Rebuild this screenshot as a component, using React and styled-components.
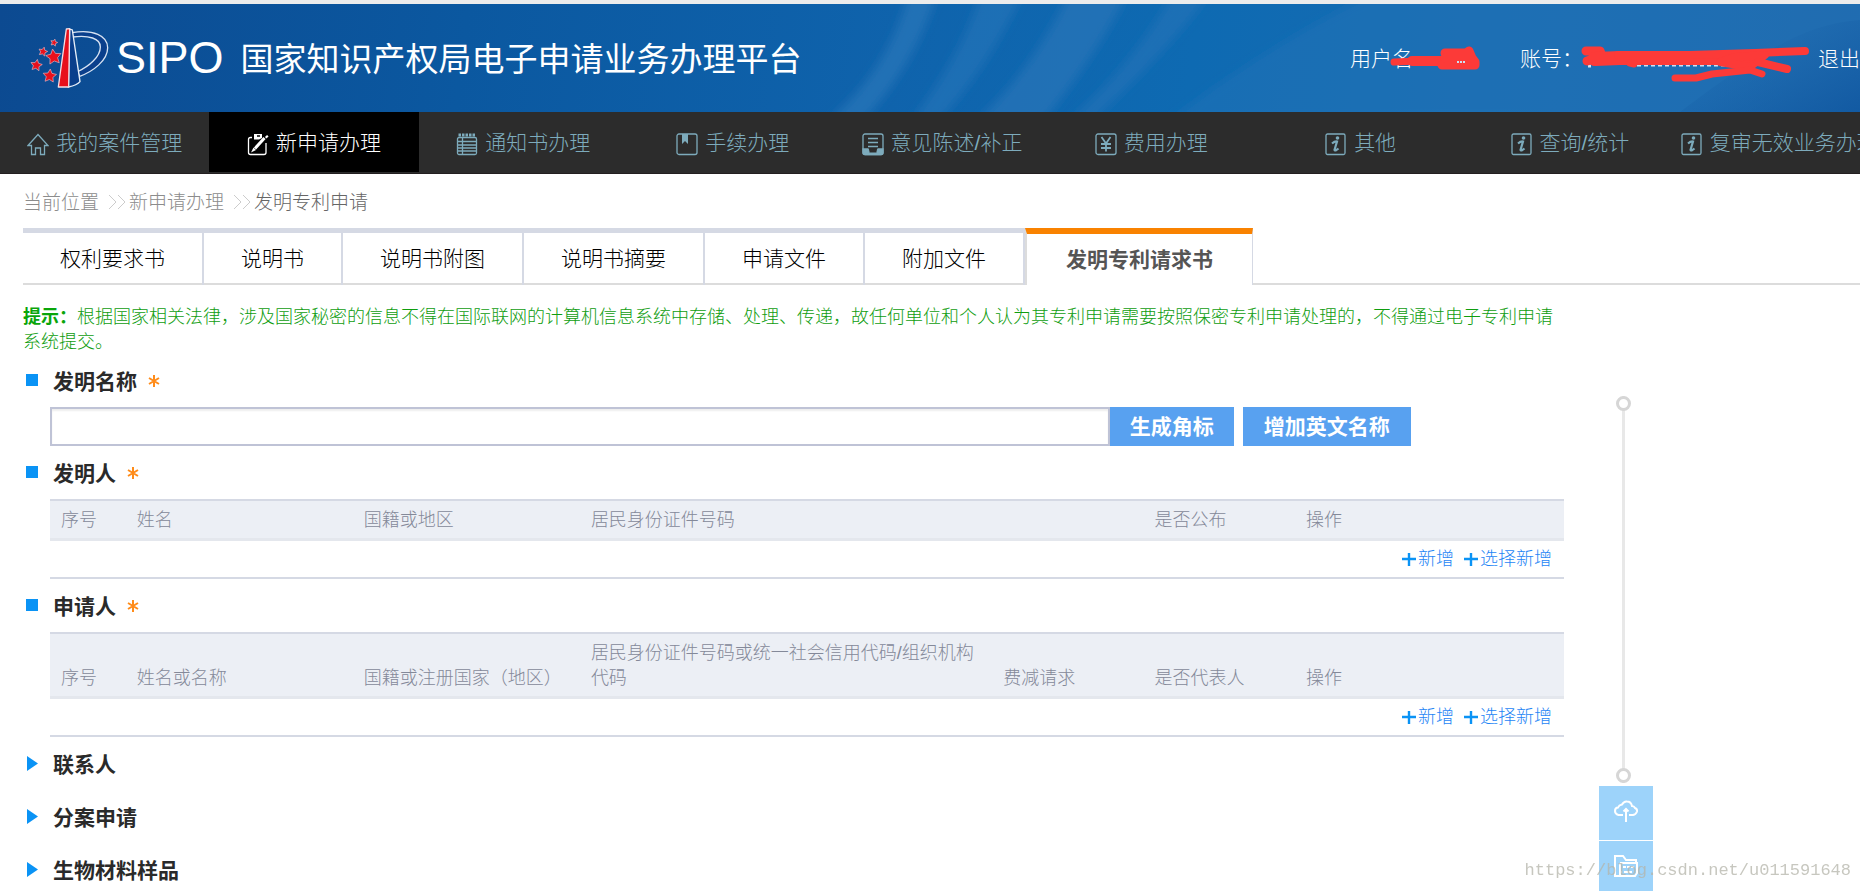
import React, { useState } from 'react';

import styled, { createGlobalStyle, css } from 'styled-components';

const GlobalStyle = createGlobalStyle`
  * {
    box-sizing: border-box;
  }

  body {
    margin: 0;
    background: #fff;
    color: #222;
    font-family: "Liberation Sans", "Noto Sans CJK SC", sans-serif;
    font-size: 18px;
    font-weight: 300;
    line-height: 25px;
  }

  button,
  input {
    font-family: inherit;
  }

  a {
    color: inherit;
    text-decoration: none;
  }
`;

const navItems = [
  { label: '我的案件管理', icon: 'home' },
  { label: '新申请办理', icon: 'edit', active: true },
  { label: '通知书办理', icon: 'notebook' },
  { label: '手续办理', icon: 'bookmark' },
  { label: '意见陈述/补正', icon: 'inbox' },
  { label: '费用办理', icon: 'yen' },
  { label: '其他', icon: 'info' },
  { label: '查询/统计', icon: 'info' },
  { label: '复审无效业务办理', icon: 'info' },
];

const tabs = ['权利要求书', '说明书', '说明书附图', '说明书摘要', '申请文件', '附加文件', '发明专利请求书'];

const inventorColumns = ['序号', '姓名', '国籍或地区', '居民身份证件号码', '', '是否公布', '操作'];

const applicantColumns = [
  '序号',
  '姓名或名称',
  '国籍或注册国家（地区）',
  '居民身份证件号码或统一社会信用代码/组织机构代码',
  '费减请求',
  '是否代表人',
  '操作',
];

const starPoints = (cx, cy, r, turn) => (
  Array.from({ length: 10 }, (_, i) => {
    const radius = i % 2 ? r * 0.5 : r;
    const angle = ((i * 36 - 90 + turn) * Math.PI) / 180;
    return `${(cx + radius * Math.cos(angle)).toFixed(1)},${(cy + radius * Math.sin(angle)).toFixed(1)}`;
  }).join(' ')
);

const Logo = () => (
  <svg width="90" height="75" viewBox="0 4 270 225" aria-hidden="true">
    <g fill="#e8101c" stroke="#e9b8c4" strokeWidth="2">
      <polygon points={starPoints(87, 69, 11, 15)} />
      <polygon points={starPoints(54, 96, 14, 15)} />
      <polygon points={starPoints(86, 112, 24, -8)} />
      <polygon points={starPoints(34, 137, 18, 10)} />
      <polygon points={starPoints(74, 169, 21, 5)} />
    </g>
    <path
      d="M141 39 C205 28 248 48 248 84 C248 122 205 155 164 170 L158 156 C192 140 226 112 226 82 C226 56 192 46 143 52 Z"
      fill="#0a3f8c"
      stroke="#d6e2f2"
      strokeWidth="4"
      strokeLinejoin="round"
    />
    <path d="M134 28 L142 31 L165 186 C158 195 146 199 130 202 Z" fill="#0a3f8c" stroke="#e6eef8" strokeWidth="4" />
    <path d="M124 28 L134 27 L131 202 L100 202 Z" fill="#e8101c" stroke="#f3dfe4" strokeWidth="4" strokeLinejoin="round" />
  </svg>
);

const Streaks = () => (
  <StreaksSvg viewBox="0 0 1860 108" preserveAspectRatio="none" aria-hidden="true">
    <defs>
      <filter id="soft" x="-10%" y="-10%" width="120%" height="120%">
        <feGaussianBlur stdDeviation="5" />
      </filter>
      <linearGradient id="corner" x1="0" y1="0" x2="1" y2="1">
        <stop offset="0.3" stopColor="#1258a0" stopOpacity="0" />
        <stop offset="1" stopColor="#0c529c" stopOpacity="0.7" />
      </linearGradient>
    </defs>
    <g fill="#2b76b9" filter="url(#soft)">
      <path d="M908 -8 C896 36 874 76 830 116 H864 C900 76 922 36 936 -8 Z" opacity="0.7" />
      <path d="M980 -8 C966 36 942 76 912 116 H940 C976 76 1000 36 1022 -8 Z" opacity="0.55" />
      <path d="M1068 -8 C1046 36 1020 76 978 116 H1044 C1076 76 1104 36 1126 -8 Z" opacity="0.65" />
      <path d="M1172 -8 C1146 36 1114 76 1070 116 H1094 C1136 76 1176 36 1208 -8 Z" opacity="0.5" />
      <path d="M1368 -8 C1300 26 1232 68 1170 116 H1870 V-8 Z" opacity="0.4" />
    </g>
    <path d="M1860 16 C1810 20 1770 40 1680 108 H1860 Z" fill="url(#corner)" />
  </StreaksSvg>
);

const NameScribble = () => (
  <Scribble width="170" height="60" viewBox="1350 30 170 60" aria-hidden="true">
    <g fill="none" stroke="#fc3a38" strokeLinecap="round" strokeLinejoin="round">
      <path d="M1394 62 L1446 60" strokeWidth="7" />
      <path d="M1412 61 L1446 61" strokeWidth="10" />
      <path d="M1445 53 H1466 L1469 51 L1472 58 L1475 62 V65 H1442" strokeWidth="9" />
      <path d="M1445 58 H1470" strokeWidth="9" />
    </g>
    <path d="M1457 62 H1466" stroke="#cfe0f2" strokeWidth="2" strokeDasharray="2 1" />
  </Scribble>
);

const AccountScribble = () => (
  <Scribble width="298" height="60" viewBox="1520 30 298 60" aria-hidden="true">
    <path d="M1588 66 H1591 M1637 65 H1728" stroke="#cfe0f2" strokeWidth="3" strokeDasharray="4 3" />
    <g fill="none" stroke="#fc3a38" strokeLinecap="round" strokeLinejoin="round">
      <path d="M1586 51 H1600 L1602 56 L1587 61" strokeWidth="9" />
      <path d="M1595 59 L1620 58 L1740 58" strokeWidth="14" />
      <path d="M1618 55 L1690 55 L1755 53 L1805 51" strokeWidth="8" />
      <path d="M1630 63 L1634 64" strokeWidth="7" />
      <path d="M1735 57 L1765 55 L1750 67 L1720 62 Z" strokeWidth="8" fill="#fc3a38" />
      <path d="M1675 78 H1696 L1712 74 L1750 70 L1762 74" strokeWidth="7" />
      <path d="M1758 62 L1787 69" strokeWidth="8" />
    </g>
  </Scribble>
);

const iconShapes = {
  home: <path d="M1 12.5 L11 1.5 L21 12.5 H17.5 V21.5 H13.5 V15 H8.5 V21.5 H4.5 V12.5 Z" />,
  edit: (
    <>
      <path d="M5 4.5 H3.5 Q1.5 4.5 1.5 6.5 V19.5 Q1.5 21.5 3.5 21.5 H17 Q19 21.5 19 19.5 V10" />
      <path d="M7 1 H15 V5 L12 6.5 H7 Z" fill="currentColor" stroke="none" />
      <path d="M10 3 H13" stroke="#000" strokeWidth="1.5" />
      <path d="M17.5 5 L8 15.5" strokeWidth="3" />
      <path d="M19 3 L20.5 4.5" strokeWidth="3" />
      <path d="M6.5 14.5 L4 19.5 L9 17 Z" fill="currentColor" stroke="none" />
    </>
  ),
  notebook: (
    <>
      <path d="M2.5 2 H20" strokeWidth="3" strokeDasharray="2.5 1" />
      <rect x="1.5" y="4.5" width="19" height="17" rx="1.5" />
      <path d="M1.5 8.5 H20.5 M1.5 12 H20.5 M1.5 15 H20.5 M1.5 18 H20.5 M6.5 5 V21" />
    </>
  ),
  bookmark: (
    <>
      <rect x="1" y="1" width="20" height="20.5" rx="2" />
      <path d="M6 1 H12 V11 L9 8 L6 11 Z" fill="currentColor" stroke="none" />
    </>
  ),
  inbox: (
    <>
      <rect x="1" y="1" width="20" height="20.5" rx="2" />
      <path d="M1 16 H6 L7.5 19 H14.5 L16 16 H21 V20 Q21 21.5 19.5 21.5 H2.5 Q1 21.5 1 20 Z" fill="currentColor" />
      <path d="M7.5 19.5 V17 H14.5 V19.5 Z" fill="#2c2c2c" stroke="none" />
      <path d="M6 5.5 H16 M6 9.5 H16 M6 13.5 H16" />
    </>
  ),
  yen: (
    <>
      <rect x="1" y="1" width="20" height="20.5" rx="2" />
      <path d="M6.5 4 L11 10.5 L15.5 4 M11 10.5 V18.5 M6 11 H16 M6 15 H16" strokeWidth="1.8" />
    </>
  ),
  info: (
    <>
      <rect x="1" y="1" width="19" height="20.5" rx="1.5" />
      <circle cx="12.5" cy="5" r="1.8" fill="currentColor" stroke="none" />
      <path d="M7 10.5 Q10 8 12 8.5 L9.5 17 Q10 18.5 13.5 15.5" strokeWidth="2.2" />
    </>
  ),
};

const NavIcon = ({ name }) => (
  <svg width="22" height="23" viewBox="0 0 22 23" fill="none" stroke="currentColor" strokeWidth="1.3" aria-hidden="true">
    {iconShapes[name]}
  </svg>
);

const Arrows = () => (
  <ArrowsSvg width="18" height="16" viewBox="0 0 18 16" aria-hidden="true">
    <path d="M1 1 L8 8 L1 15 M10 1 L17 8 L10 15" />
  </ArrowsSvg>
);

const AddLink = ({ children }) => (
  <AddLinkStyle href="#add">
    <svg width="14" height="14" viewBox="0 0 14 14" aria-hidden="true">
      <path d="M0 6 H14 M7 0 V13" stroke="#0a93f5" strokeWidth="2.4" />
    </svg>
    {children}
  </AddLinkStyle>
);

const Section = ({ title, required, children }) => {
  const [open, setOpen] = useState(Boolean(children));

  return (
    <section>
      <SectionTitle>
        <SectionToggle type="button" aria-expanded={open} onClick={() => setOpen(!open)}>
          <Marker width="12" height="16" viewBox="0 0 12 16" aria-hidden="true">
            {open ? <rect x="0" y="1" width="12" height="12" /> : <path d="M1 0 L12 7.5 L1 15 Z" />}
          </Marker>
          {title}
          {required && (
            <RequiredMark width="12" height="12" viewBox="0 0 12 12" aria-label="*">
              <path d="M6 0 V12 M1 3 L11 9 M11 3 L1 9" />
            </RequiredMark>
          )}
        </SectionToggle>
      </SectionTitle>
      {open && children && <SectionBody>{children}</SectionBody>}
    </section>
  );
};

const PeopleTable = ({ columns }) => (
  <Table>
    <colgroup>
      <col width="5%" />
      <col width="15%" />
      <col width="15%" />
      <col />
      <col width="10%" />
      <col width="10%" />
      <col width="269" />
    </colgroup>
    <thead>
      <tr>
        {columns.map((column, i) => (
          <th key={i} scope="col">{column}</th>
        ))}
      </tr>
    </thead>
    <tbody>
      <tr>
        <td colSpan={columns.length}>
          <Actions>
            <AddLink>新增</AddLink>
            <AddLink>选择新增</AddLink>
          </Actions>
        </td>
      </tr>
    </tbody>
  </Table>
);

const App = () => {
  const [name, setName] = useState('');
  const [activeTab, setActiveTab] = useState('发明专利请求书');

  return (
    <Page>
      <GlobalStyle />

      <Header>
        <Streaks />
        <Logo />
        <Brand>SIPO</Brand>
        <Title>国家知识产权局电子申请业务办理平台</Title>
        <UserBar>
          <UserName>
            用户名
            <NameScribble />
          </UserName>
          <Account>
            账号：
            <AccountScribble />
          </Account>
          <a href="#logout">退出</a>
        </UserBar>
      </Header>

      <Nav>
        <NavList>
          {navItems.map((item) => (
            <li key={item.label}>
              <NavLink href="#nav" $active={item.active}>
                <NavIcon name={item.icon} />
                {item.label}
              </NavLink>
            </li>
          ))}
        </NavList>
      </Nav>

      <Breadcrumb>
        <a href="#home">当前位置</a>
        <Arrows />
        <a href="#new">新申请办理</a>
        <Arrows />
        <strong>发明专利申请</strong>
      </Breadcrumb>

      <Tabs role="tablist">
        {tabs.map((tab) => (
          <Tab
            key={tab}
            type="button"
            role="tab"
            aria-selected={tab === activeTab}
            $active={tab === activeTab}
            onClick={() => setActiveTab(tab)}
          >
            {tab}
          </Tab>
        ))}
      </Tabs>

      <Body>
        <Main>
          <Notice>
            <b>提示：</b>
            根据国家相关法律，涉及国家秘密的信息不得在国际联网的计算机信息系统中存储、处理、传递，故任何单位和个人认为其专利申请需要按照保密专利申请处理的，不得通过电子专利申请系统提交。
          </Notice>

          <Section title="发明名称" required>
            <NameRow>
              <NameInput
                type="text"
                aria-label="发明名称"
                value={name}
                onChange={(e) => setName(e.target.value)}
              />
              <BlueButton type="button">生成角标</BlueButton>
              <BlueButton type="button" $spaced>增加英文名称</BlueButton>
            </NameRow>
          </Section>

          <Section title="发明人" required>
            <PeopleTable columns={inventorColumns} />
          </Section>

          <Section title="申请人" required>
            <PeopleTable columns={applicantColumns} />
          </Section>

          <Section title="联系人" />
          <Section title="分案申请" />
          <Section title="生物材料样品" />
        </Main>

        <Aside>
          <Track>
            <Dot />
            <Dot />
          </Track>
          <ToolButton type="button" aria-label="上传">
            <svg width="24" height="23" viewBox="0 0 24 23">
              <path d="M9 15 H4.5 Q1 14 1 11 Q1 7.5 4 7.5 Q5 5 8 4.5 Q10 1 13 1.5 Q17 1.5 18 6 Q20 6 21 8 Q23.5 9 23 11.5 Q22 14.5 19 15 H15" />
              <path d="M12 22 V9.5 M9.5 11.5 L12 9 L14.5 11.5" />
            </svg>
          </ToolButton>
          <ToolButton type="button" aria-label="文件">
            <svg width="24" height="23" viewBox="0 0 24 23">
              <path d="M6 21 H1 V1 H9 L12 5 H22 V8 M6 8 V17 H8 M6 8 H23 V18 L21 21 H6 V17" />
              <path d="M9 12 H20" strokeDasharray="3 1" />
              <path d="M10 17 H18" />
            </svg>
          </ToolButton>
        </Aside>
      </Body>

      <Watermark>https://blog.csdn.net/u011591648</Watermark>
    </Page>
  );
};

const Page = styled.div`
  height: 100vh;
  overflow: hidden;
`;

const Header = styled.header`
  position: relative;
  display: flex;
  align-items: center;
  height: 112px;
  padding-left: 25px;
  border-top: 4px solid #ececec;
  background: linear-gradient(97deg, #0c4a91 0%, #0b58a0 25%, #0f63ac 48%, #0e6ab2 64%, #176cb2 80%, #1c67ac 100%);
  color: #fff;
`;

const StreaksSvg = styled.svg`
  position: absolute;
  inset: 0;
  width: 100%;
  height: 100%;

  & ~ * {
    position: relative;
  }
`;

const Brand = styled.span`
  margin-left: 1px;
  font-family: "Liberation Sans", sans-serif;
  font-size: 45px;
  font-weight: 400;
  line-height: 48px;
`;

const Title = styled.h1`
  margin: 0 0 0 17px;
  padding-top: 3px;
  font-size: 33px;
  font-weight: 400;
  line-height: 40px;
  white-space: nowrap;
`;

const UserBar = styled.div`
  display: flex;
  margin-left: auto;
  padding-top: 1px;
  font-size: 21px;
  line-height: 30px;
  white-space: nowrap;
`;

const UserName = styled.div`
  position: relative;
  width: 170px;
`;

const Account = styled.div`
  position: relative;
  width: 298px;
`;

const Scribble = styled.svg`
  position: absolute;
  left: 0;
  top: -14px;
`;

const Nav = styled.nav`
  height: 62px;
  overflow: hidden;
  background: #2c2c2c;
  border-bottom: 1px solid #231f20;
`;

/* the last entry runs past the right edge of the window */
const NavList = styled.ul`
  display: flex;
  margin: 0 -24px 0 0;
  padding: 0;
  list-style: none;

  li {
    flex: 1 1 0;
    min-width: 0;
  }
`;

const NavLink = styled.a`
  display: flex;
  align-items: center;
  justify-content: center;
  gap: 7px;
  height: 60px;
  color: ${(props) => (props.$active ? '#fff' : '#7dabbc')};
  background: ${(props) => (props.$active ? '#000' : 'transparent')};
  font-size: 21px;
  white-space: nowrap;

  svg {
    flex: none;
    margin-top: 5px;
  }
`;

const Breadcrumb = styled.nav`
  display: flex;
  align-items: center;
  height: 54px;
  padding: 2px 0 0 23px;
  color: #8c8c8c;
  font-size: 19px;

  strong {
    color: #666;
    font-weight: inherit;
  }
`;

const ArrowsSvg = styled.svg`
  margin: 0 3px 0 9px;
  fill: none;
  stroke: #ccc;
`;

const Tabs = styled.div`
  display: flex;
  height: 57px;
  padding-left: 23px;

  &::after {
    content: '';
    flex: 1;
    border-bottom: 2px solid #dcdcdc;
  }
`;

const Tab = styled.button`
  padding: 0 37px;
  border: solid #d5d9e4;
  border-width: 5px 2px 0 0;
  box-shadow: inset 0 -2px #dcdcdc;
  background: #fff;
  color: #000;
  cursor: pointer;
  font-size: 21px;
  font-weight: 300;
  line-height: 30px;
  white-space: nowrap;

  ${(props) => props.$active && css`
    padding: 0 39px;
    border-color: #f98200 #d5d9e4 #fff #dcdcdc;
    border-width: 6px 1px 0 2px;
    box-shadow: none;
    color: #555;
    font-weight: 700;
  `}
`;

const Body = styled.div`
  display: flex;
  align-items: flex-start;
`;

const Main = styled.main`
  flex: 1;
  min-width: 0;
  padding: 20px 0 0 23px;
`;

const Notice = styled.p`
  margin: 0 0 -1px;
  color: #0f9d0f;

  b {
    color: #0aa50a;
    font-weight: 700;
  }
`;

const SectionTitle = styled.h2`
  margin: 0;
  font-size: 21px;
  line-height: 30px;
`;

const SectionToggle = styled.button`
  display: flex;
  align-items: center;
  height: 53px;
  padding: 0 0 2px 3px;
  border: 0;
  background: none;
  color: #2a2a2a;
  cursor: pointer;
  font-size: inherit;
  font-weight: 700;
`;

const Marker = styled.svg`
  margin: 2px 15px 0 0;
  fill: #0a93f5;
`;

const RequiredMark = styled.svg`
  margin: 2px 0 0 11px;
  stroke: #ff8c1a;
  stroke-width: 2;
`;

const SectionBody = styled.div`
  margin-left: 27px;
`;

const NameRow = styled.div`
  display: flex;
  height: 39px;
`;

const NameInput = styled.input`
  width: 70%;
  padding: 0 8px;
  border: 2px solid #bfc3d6;
  border-radius: 0;
  box-shadow: inset 0 2px 2px #eee;
  font-size: 18px;
  outline: none;
`;

const BlueButton = styled.button`
  margin-left: ${(props) => (props.$spaced ? '9px' : 0)};
  padding: ${(props) => (props.$spaced ? '0 21px 3px' : '0 20px 3px')};
  border: 0;
  background: #58a1f0;
  color: #fff;
  cursor: pointer;
  font-size: 21px;
  font-weight: 700;
  white-space: nowrap;
`;

const Table = styled.table`
  width: 100%;
  border-collapse: separate;
  border-spacing: 0;
  table-layout: fixed;

  th {
    padding: 7px 4px 5px 11px;
    border-top: 2px solid #d5d9e4;
    border-bottom: 3px solid #e4e7ed;
    background: #eceff5;
    color: #848999;
    font-weight: inherit;
    text-align: left;
    vertical-align: bottom;
  }

  td {
    padding: 1px 12px 0;
    height: 38px;
    border-bottom: 2px solid #d5d9e4;
  }
`;

const Actions = styled.div`
  display: flex;
  justify-content: flex-end;
  gap: 10px;
`;

const AddLinkStyle = styled.a`
  display: flex;
  align-items: center;
  gap: 2px;
  color: #1f86f5;
`;

const Aside = styled.aside`
  flex: none;
  width: 296px;
  padding: 111px 0 0 35px;
`;

const Track = styled.div`
  display: flex;
  flex-direction: column;
  justify-content: space-between;
  width: 15px;
  height: 387px;
  margin: 0 0 3px 17px;
  background: linear-gradient(#e8e8e8, #e8e8e8) center / 3px 100% no-repeat;
`;

const Dot = styled.span`
  height: 15px;
  border: 3px solid #d6d6d6;
  border-radius: 50%;
  background: #fff;
`;

const ToolButton = styled.button`
  display: block;
  width: 54px;
  height: 54px;
  margin-bottom: 1px;
  padding: 0 0 4px;
  border: 0;
  background: #9dd3fa;
  cursor: pointer;

  svg {
    display: block;
    margin: 0 auto;
    fill: none;
    stroke: #fff;
    stroke-width: 2;
  }
`;

const Watermark = styled.div`
  position: fixed;
  right: 9px;
  bottom: 8px;
  color: rgba(180, 180, 170, 0.75);
  font-family: "Liberation Mono", monospace;
  font-size: 17px;
  pointer-events: none;
`;

export default App;
